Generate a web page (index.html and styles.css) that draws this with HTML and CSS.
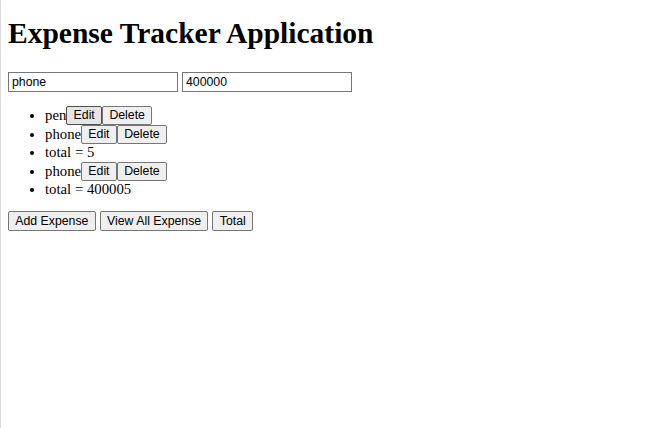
FILE: index.html
```html
<!DOCTYPE html>
<html>
<head>
<meta charset="utf-8">
<link rel="stylesheet" href="styles.css">
</head>
<body>
<h1 class="title">Expense Tracker Application</h1>
<div class="form">
<input class="field" type="text" value="phone"><input class="field" type="text" value="400000">
</div>
<ul class="list">
<li class="item">pen<button class="btn btn-hover">Edit</button><button class="btn">Delete</button></li>
<li class="item">phone<button class="btn">Edit</button><button class="btn">Delete</button></li>
<li class="item item-text">total = 5</li>
<li class="item">phone<button class="btn">Edit</button><button class="btn">Delete</button></li>
<li class="item item-text">total = 400005</li>
</ul>
<div class="actions">
<button class="btn">Add Expense</button><button class="btn">View All Expense</button><button class="btn">Total</button>
</div>
</body>
</html>
```
FILE: styles.css
```css
html {
  box-shadow: inset 1px 0 #dcdcdc;
  min-height: 100%;
}
body {
  margin: 8px;
  font-family: "Liberation Serif", serif;
  font-size: 14.75px;
  color: #000;
}
.title {
  margin: 8px 0 0;
  font-size: 29.5px;
  line-height: 34px;
  font-weight: bold;
}
.form {
  display: flex;
  gap: 4px;
  margin-top: 22px;
}
.field {
  box-sizing: border-box;
  width: 170px;
  height: 20px;
  margin: 0;
  padding: 1px 3px;
  font-family: "Liberation Sans", Arial, sans-serif;
  font-size: 12.3px;
  border: 1px solid #767676;
  border-radius: 0;
}
.list {
  margin: 14px 0 12px;
  padding-left: 37px;
}
.item {
  height: 19px;
  line-height: 19px;
}
.item-text {
  height: 18px;
  line-height: 17px;
}
.btn {
  box-sizing: border-box;
  height: 19px;
  margin: 0;
  padding: 0 6.3px;
  font-family: "Liberation Sans", Arial, sans-serif;
  font-size: 12.3px;
  line-height: 15px;
  color: #000;
  background: #efefef;
  border: 1px solid #767676;
  border-radius: 2px;
  vertical-align: top;
}
.btn-hover {
  background: #e5e5e5;
  border-color: #4f4f4f;
}
.actions {
  display: flex;
  gap: 4px;
}
.actions .btn {
  height: 20px;
}
```
